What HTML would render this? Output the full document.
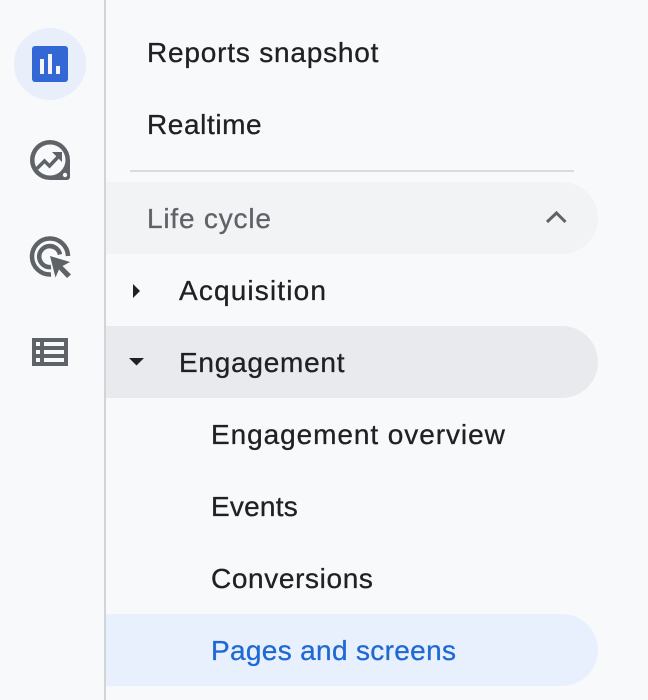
<!DOCTYPE html>
<html><head><meta charset="utf-8">
<style>
html,body{margin:0;padding:0;width:648px;height:700px;overflow:hidden;background:#f8f9fb;}
body{position:relative;font-family:"Liberation Sans",sans-serif;color:#202124;}
.t{position:absolute;font-size:28px;line-height:36px;white-space:nowrap;-webkit-text-stroke:0.3px currentColor;}
.b{position:absolute;}
</style></head>
<body>
<div class="b" style="left:104px;top:0;width:2px;height:700px;background:#d2d4d7"></div>
<div class="b" style="left:14px;top:28px;width:72px;height:72px;border-radius:50%;background:#e8effa"></div>
<svg class="b" style="left:0;top:0" width="106" height="400" viewBox="0 0 106 400">
<rect x="32" y="46" width="36" height="36" rx="3" fill="#3367d6"/>
<rect x="40" y="59" width="4" height="15" fill="#f4f6fb"/>
<rect x="48" y="54" width="4" height="20" fill="#f4f6fb"/>
<rect x="56" y="66" width="4" height="8" fill="#f4f6fb"/>
<path d="M50 140A20 20 0 1 0 50 180H67A3 3 0 0 0 70 177V160A20 20 0 0 0 50 140Z" fill="#5f6368"/>
<circle cx="50" cy="160" r="15.500" fill="#f8f9fb"/>
<circle cx="65" cy="175" r="2.200" fill="#f8f9fb"/>
<path d="M37 168.500L44.500 161L49.500 166L58 157" fill="none" stroke="#5f6368" stroke-width="3.500"/>
<path d="M52 152H62V162Z" fill="#5f6368"/>
<path d="M51 274.500A18 18 0 1 1 68 256" fill="none" stroke="#5f6368" stroke-width="4.500"/>
<path d="M51 267A10.500 10.500 0 1 1 60 254.500" fill="none" stroke="#5f6368" stroke-width="4.500"/>
<path d="M50 256L70 262L62.500 266L71 274.500L67 278L59 269.500L55.500 277.500Z" fill="#5f6368"/>
<rect x="32" y="338" width="36" height="28" fill="#5f6368"/>
<g fill="#f8f9fb">
<rect x="36" y="342" width="4" height="4"/><rect x="36" y="350" width="4" height="4"/><rect x="36" y="358" width="4" height="4"/>
<rect x="44" y="342" width="20" height="4"/><rect x="44" y="350" width="20" height="4"/><rect x="44" y="358" width="20" height="4"/>
</g>
</svg>
<div class="t" style="left:147px;top:35px;letter-spacing:.8px">Reports snapshot</div>
<div class="t" style="left:147px;top:107px;letter-spacing:.59px">Realtime</div>
<div class="b" style="left:130px;top:170px;width:444px;height:2px;background:#dadce0"></div>
<div class="b" style="left:106px;top:182px;width:492px;height:72px;border-radius:0 36px 36px 0;background:#f1f3f4"></div>
<div class="t" style="left:147px;top:201px;color:#5f6368;letter-spacing:.8px">Life cycle</div>
<svg class="b" style="left:544px;top:208px" width="24" height="20"><path d="M3 14L12.500 5L21.500 14" fill="none" stroke="#5f6368" stroke-width="3"/></svg>
<svg class="b" style="left:130px;top:282px" width="14" height="18"><path d="M3 2L10 9L3 16Z" fill="#202124"/></svg>
<div class="t" style="left:179px;top:273px;letter-spacing:1.15px">Acquisition</div>
<div class="b" style="left:106px;top:326px;width:492px;height:72px;border-radius:0 36px 36px 0;background:#e8eaed"></div>
<svg class="b" style="left:127px;top:356px" width="20" height="12"><path d="M2 2H17L9.500 9.500Z" fill="#202124"/></svg>
<div class="t" style="left:179px;top:345px;letter-spacing:.75px">Engagement</div>
<div class="t" style="left:211px;top:417px;letter-spacing:.93px">Engagement overview</div>
<div class="t" style="left:211px;top:489px;letter-spacing:.22px">Events</div>
<div class="t" style="left:211px;top:561px;letter-spacing:.63px">Conversions</div>
<div class="b" style="left:106px;top:614px;width:492px;height:72px;border-radius:0 36px 36px 0;background:#e8f0fe"></div>
<div class="t" style="left:211px;top:633px;color:#1f69d3;letter-spacing:.33px">Pages and screens</div>
</body></html>
